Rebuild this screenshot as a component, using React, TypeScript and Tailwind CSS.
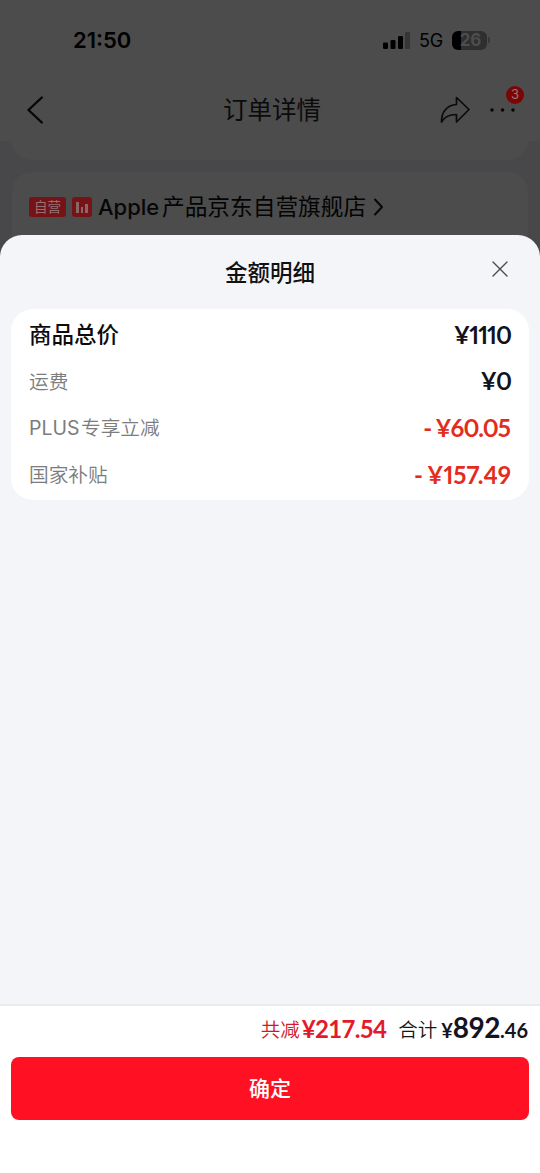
import React from 'react';

interface AmountRow {
  label: string;
  latin?: string;
  value: string;
  discount?: boolean;
  total?: boolean;
  tracking: string;
}

const ROWS: AmountRow[] = [
  { label: '商品总价', value: '¥1110', total: true, tracking: 'tracking-[-1px]' },
  { label: '运费', value: '¥0', tracking: 'tracking-[-1px] pb-[2px]' },
  { label: '专享立减', latin: 'PLUS', value: '¥60.05', discount: true, tracking: 'tracking-[-1px] pr-px' },
  { label: '国家补贴', value: '¥157.49', discount: true, tracking: 'tracking-[0px]' },
];

const StatusBar: React.FC = () => (
  <div className="flex h-20 items-center justify-between pl-[73px] pr-[50px]">
    <span className="font-['Inter',sans-serif] text-[22px] font-semibold leading-none text-black">21:50</span>
    <div className="flex items-center">
      <svg className="mr-[9px] h-[17px] w-[27px]" viewBox="0 0 27 17">
        <rect x="0" y="10.5" width="5" height="6.5" rx="1.3" fill="#000" />
        <rect x="7.5" y="8" width="5" height="9" rx="1.3" fill="#000" />
        <rect x="15" y="4" width="5" height="13" rx="1.3" fill="#000" />
        <rect x="22" y="0" width="5" height="17" rx="1.3" fill="#363636" />
      </svg>
      <span className="mr-[9px] w-[24px] whitespace-nowrap pt-[2px] font-['Inter',sans-serif] text-[18px] font-normal leading-none tracking-[-0.2px] text-black">5G</span>
      <div className="flex h-[19px] w-[35px] items-center justify-center rounded-[6px] bg-[linear-gradient(90deg,#000_26%,#2f2f2f_26%)]">
        <span className="pl-[2px] font-['Inter',sans-serif] text-[17px] font-bold leading-none text-[#4d4d4d]">26</span>
      </div>
      <span className="ml-px h-[6px] w-[2px] rounded-r-full bg-[#353535]" />
    </div>
  </div>
);

const NavBar: React.FC = () => (
  <div className="flex h-[60px] items-center">
    <div className="w-[223px] pl-[26px]">
      <svg className="h-[28px] w-[18px]" viewBox="0 0 18 28" fill="none" stroke="#060606" strokeWidth="2.4" strokeLinecap="round" strokeLinejoin="round">
        <path d="M15.8 1.5 2.5 14l13.3 12.5" />
      </svg>
    </div>
    <h1 className="w-[217px] whitespace-nowrap pb-[2px] text-[24.5px] leading-none text-[#0b0b0b]">订单详情</h1>
    <svg className="h-[28px] w-[30px]" viewBox="0 0 30 28" fill="none" stroke="#0b0b0b" strokeWidth="1.7" strokeLinejoin="round">
      <path d="M16.5 1.5 29 13.5 16.5 26v-7.5C9 18.5 4.5 20.5 1.5 26 1.3 16 7 9 16.5 8.5Z" />
    </svg>
    <div className="relative ml-[20px] pb-px">
      <svg className="h-[4px] w-[27px]" viewBox="0 0 27 4" fill="#080808">
        <circle cx="2" cy="2" r="1.8" />
        <circle cx="12.5" cy="2" r="1.8" />
        <circle cx="23" cy="2" r="1.8" />
      </svg>
      <span className="absolute -top-[22px] left-[16px] flex size-[18px] items-center justify-center rounded-full bg-[#7a0505] font-['Inter',sans-serif] text-[13px] leading-none text-[#9a7777]">3</span>
    </div>
  </div>
);

const StoreLine: React.FC = () => (
  <div className="mx-3 mt-[12px] flex h-[90px] items-start rounded-t-[20px] bg-[#4c4c4c] pl-[17px] pt-[19px]">
    <div className="flex h-[32px] items-center">
      <span className="mb-px flex h-[20px] w-[37px] items-center justify-center rounded-[3px] bg-[#751316] text-[13.5px] leading-none text-[#947071]">自营</span>
      <span className="mb-px ml-[6px] flex size-[20px] items-end justify-center gap-[2px] rounded-[3px] bg-[#751316] pb-[4px]">
        <i className="h-[11px] w-[2.5px] bg-[#8c6667]" />
        <i className="h-[6px] w-[2.5px] bg-[#8c6667]" />
        <i className="h-[9px] w-[2.5px] bg-[#8c6667]" />
      </span>
      <span className="ml-[6px] w-[64px] font-['Inter',sans-serif] text-[22px] font-medium leading-none text-[#070707]">Apple</span>
      <span className="whitespace-nowrap pb-px text-[22.7px] font-normal leading-none text-[#040404]">产品京东自营旗舰店</span>
      <svg className="ml-[7px] h-[18px] w-[11px]" viewBox="0 0 11 18" fill="none" stroke="#080808" strokeWidth="2" strokeLinecap="round" strokeLinejoin="round">
        <path d="m2 1.5 7 7.5-7 7.5" />
      </svg>
    </div>
  </div>
);

const AmountLine: React.FC<{ row: AmountRow }> = ({ row }) => (
  <div className="flex h-[46.5px] items-center justify-between">
    {row.total ? (
      <span className="pb-[5px] text-[22.5px] font-medium leading-none text-[#0c0c0e]">{row.label}</span>
    ) : (
      <span className="flex items-center pb-[2px] text-[19.7px] font-[350] leading-none text-[#7c7c7c]">
        {row.latin && (
          <span className="w-[52px] pt-[3px] font-['Inter',sans-serif] text-[19.5px] font-normal leading-none">{row.latin}</span>
        )}
        {row.label}
      </span>
    )}
    <span
      className={`flex items-center whitespace-nowrap font-['Lato',sans-serif] text-[24px] font-bold leading-none proportional-nums ${row.tracking} ${
        row.discount ? 'text-[#e42c1c]' : 'text-[#12121e]'
      }`}
    >
      {row.discount && <span className="mr-[4px]">-</span>}
      {row.value}
    </span>
  </div>
);

export default function App() {
  return (
    <div className="flex h-[1173px] w-[540px] flex-col overflow-hidden bg-[#48484a] font-['Noto_Sans_CJK_SC',sans-serif]">
      <header className="h-[141px] shrink-0 bg-[#4c4c4c]">
        <StatusBar />
        <NavBar />
      </header>
      <div className="mx-3 h-[19px] shrink-0 rounded-b-[20px] bg-[#4c4c4c]" />
      <StoreLine />

      <section className="relative -mt-[27px] flex flex-1 flex-col rounded-t-[22px] bg-[#f4f5f9]">
        <div className="flex h-[74px] shrink-0 items-center pl-[225px]">
          <h2 className="w-[266px] pb-[2px] text-[22.5px] font-medium leading-none text-[#111114]">金额明细</h2>
          <svg className="mb-[6px] size-[18px]" viewBox="0 0 18 18" fill="none" stroke="#4a4a50" strokeWidth="1.4" strokeLinecap="round">
            <path d="m2 2 14 14M16 2 2 16" />
          </svg>
        </div>

        <div className="mx-[11px] h-[191px] shrink-0 rounded-[22px] bg-white pl-[18px] pr-[18px] pt-[3px]">
          {ROWS.map((row) => (
            <AmountLine key={row.label} row={row} />
          ))}
        </div>

        <footer className="mt-auto h-[169px] border-t-2 border-[#e9ebed] bg-white px-[11px]">
          <div className="flex h-[51px] items-center justify-end whitespace-nowrap pb-[5px] pr-px leading-none">
            <span className="pb-px text-[19.5px] font-[350] text-[#d3182b]">共减</span>
            <span className="ml-[2px] mr-[12px] font-['Lato',sans-serif] text-[24px] font-bold tracking-[-0.7px] text-[#e31a2c]">¥217.54</span>
            <span className="mr-[4px] pb-px text-[19.5px] font-[350] text-[#18181c]">合计</span>
            <span className="flex items-baseline pb-[5px] font-['Lato',sans-serif] font-bold text-[#14141f]">
              <span className="text-[20px]">¥</span>
              <span className="text-[28px] tracking-[-0.5px]">892</span>
              <span className="text-[20px]">.46</span>
            </span>
          </div>
          <button className="flex h-[63px] w-full items-center justify-center rounded-[8px] bg-[#ff1022] pb-[2px] text-[21px] font-medium leading-none text-white">
            确定
          </button>
        </footer>
      </section>
    </div>
  );
}
